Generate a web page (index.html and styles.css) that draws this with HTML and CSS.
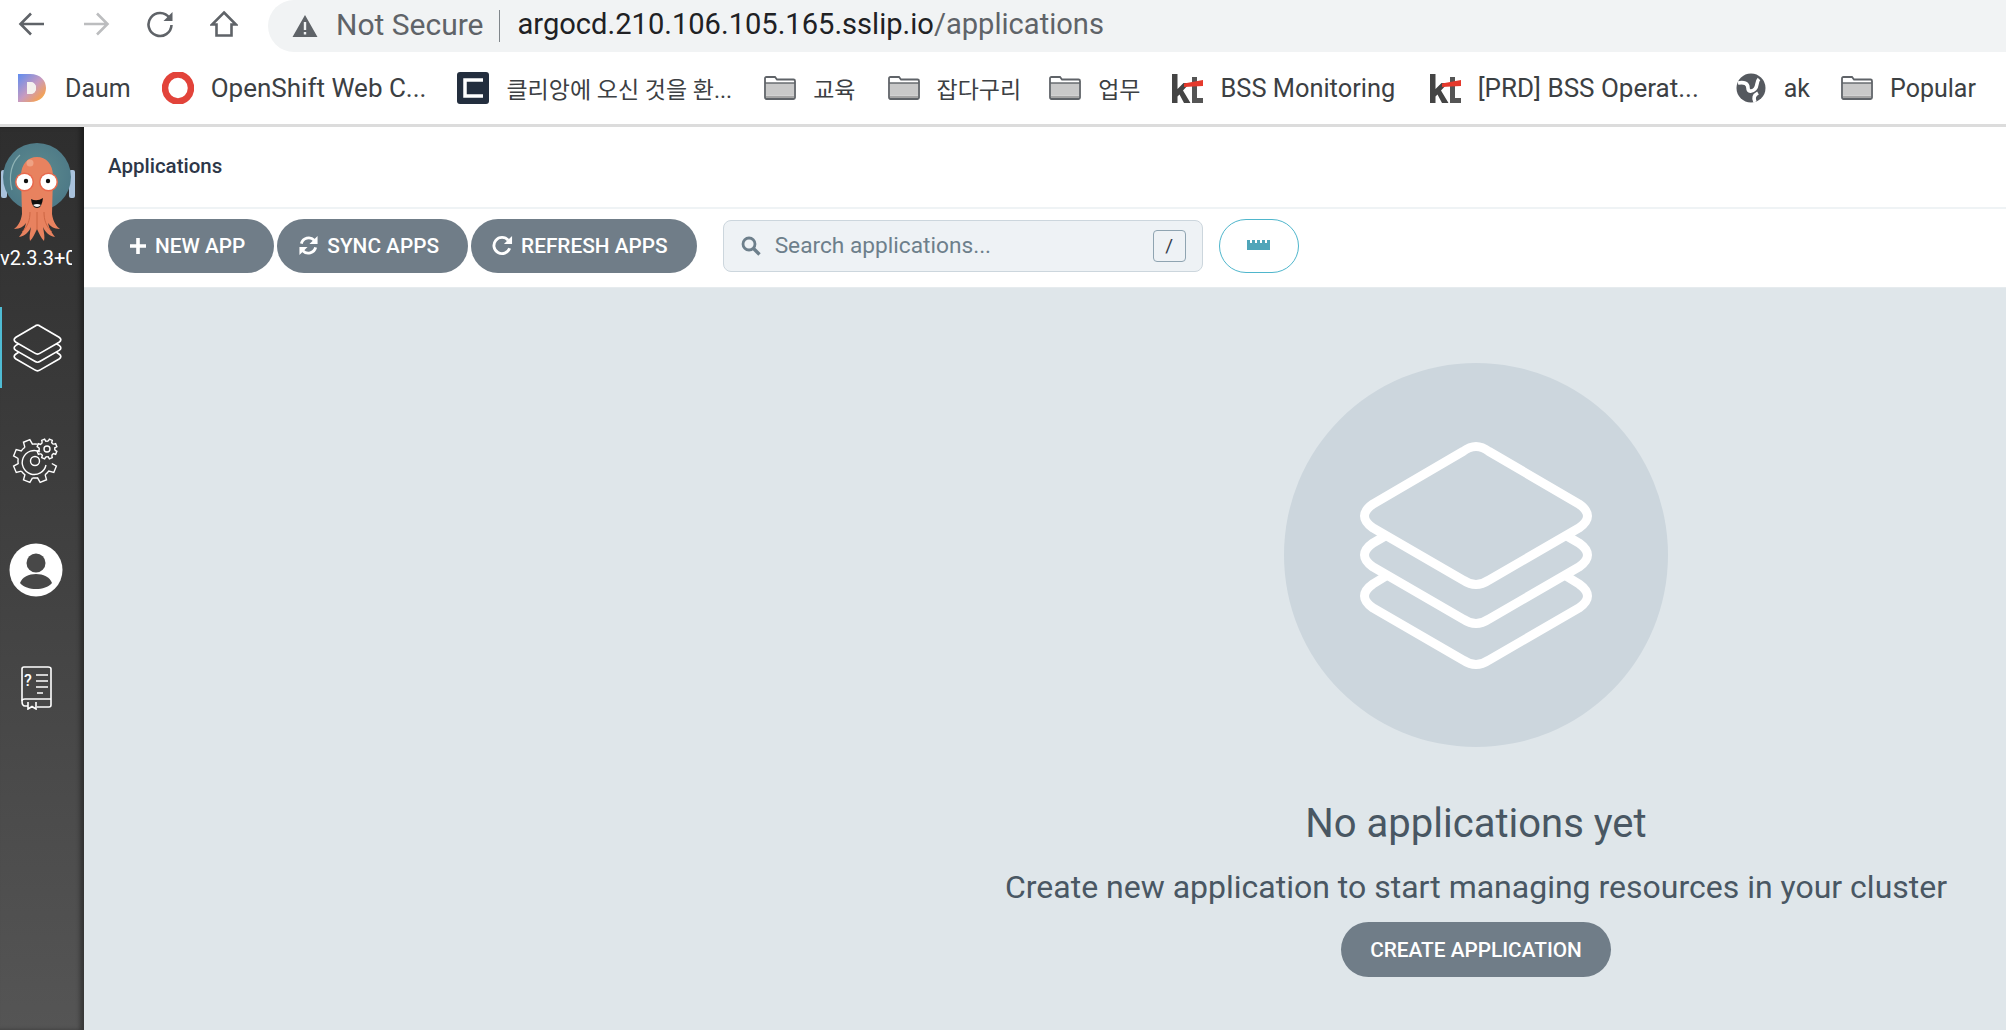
FILE: index.html
```html
<!DOCTYPE html>
<html lang="en">

<head>
    <meta charset="UTF-8">
    <title>Argo CD</title>
    <link rel="stylesheet" href="styles.css">
</head>

<body>
    <svg class="defs" width="0" height="0">
        <defs>
            <symbol id="layers" viewBox="-1 -1 234 229">
                <path d="M103 9.5 Q116 -0.5 129 9.5 L219 62 Q236 74 219 86 L129 138 Q116 147 103 138 L13 86 Q-4 74 13 62 Z" />
                <path d="M26 93.5 L13 101 Q-4 113 13 125 L103 177 Q116 186 129 177 L219 125 Q236 113 219 101 L206 93.5" />
                <path d="M26 134 L13 142 Q-4 154 13 166 L103 218 Q116 227 129 218 L219 166 Q236 154 219 142 L206 134" />
            </symbol>
            <path id="tooth" vector-effect="non-scaling-stroke" d="M16.8 2.5 L21.4 5.1 L18.8 11.5 L13.7 10.1 A17 17 0 0 1 10.1 13.7" />
            <symbol id="folder" viewBox="0 0 32 24">
                <path d="M1 21 V2.5 Q1 1 2.5 1 H11 L13 3.5 H29.5 Q31 3.5 31 5 V21.5 Q31 23 29.5 23 H2.5 Q1 23 1 21 Z" fill="#fff" stroke="#5f6368" stroke-width="1.8" />
                <path d="M2 7 H30 V19 H2 Z" fill="#c9c9c9" />
                <path d="M1 7 H31" stroke="#5f6368" stroke-width="1.4" />
                <path d="M2 19.5 H30 V22 H2 Z" fill="#a4a4a4" />
            </symbol>
            <symbol id="kt" viewBox="0 0 32 32">
                <path d="M1 2 H6.5 V17 L12.5 11 H19 L12 18.5 L19.5 31 H13 L8.5 22.5 L6.5 24.5 V31 H1 Z" fill="#444" />
                <path d="M21 5 H26 V31 H21 Z" fill="#555" />
                <path d="M26 31 H32 V26 H26 Z" fill="#555" />
                <path d="M13 11.5 L32 8 V14 L13 15 Z" fill="#e5392c" />
            </symbol>
        </defs>
    </svg>

    <div class="toolbar">
        <div class="nav-icons">
            <svg class="nav-icon" viewBox="0 0 28 28"><path d="M26 14 H3 M13 3.5 L2.5 14 L13 24.5" /></svg>
            <svg class="nav-icon forward" viewBox="0 0 28 28"><path d="M2 14 H25 M15 3.5 L25.5 14 L15 24.5" /></svg>
            <svg class="nav-icon" viewBox="0 0 28 28"><path d="M23.5 8 A11.5 11.5 0 1 0 25.5 15" /><path class="solid" d="M26.5 2 V11 H17.5 Z" /></svg>
            <svg class="nav-icon" viewBox="0 0 28 28"><path d="M14 2.5 L26 14.5 H21.5 V25.5 H6.5 V14.5 H2 Z" /></svg>
        </div>
        <div class="omnibox">
            <svg class="warn" viewBox="0 0 26 24"><path d="M13 1 L25.5 23 H.5 Z M11.8 8 V16 H14.2 V8 Z M11.8 18 V20.5 H14.2 V18 Z" fill-rule="evenodd" /></svg>
            <span class="not-secure">Not Secure</span>
            <span class="omni-sep"></span>
            <span class="url">argocd.210.106.105.165.sslip.io<span class="url-path">/applications</span></span>
        </div>
    </div>

    <div class="bookmarks">
        <a class="bm gap-31">
            <svg class="bm-icon" viewBox="0 0 32 32">
                <defs>
                    <linearGradient id="daumfill" x1="0" y1="0" x2="1" y2="1">
                        <stop offset="0" stop-color="#5f8df0" />
                        <stop offset=".5" stop-color="#c79bc0" />
                        <stop offset=".8" stop-color="#f0a060" />
                        <stop offset="1" stop-color="#f0d040" />
                    </linearGradient>
                </defs>
                <path d="M2 2 H14 C25 2 30 9 30 16 C30 23 25 30 14 30 H2 Z M11 10 V22 H14 C18 22 20 19 20 16 C20 13 18 10 14 10 Z" fill="url(#daumfill)" fill-rule="evenodd" />
                <path d="M11 10 H14 C18 10 20 13 20 16 C20 19 18 22 14 22 H11 Z" fill="#f4f1ee" />
            </svg>
            Daum
        </a>
        <a class="bm bm-long gap-31">
            <svg class="bm-icon" viewBox="0 0 32 32"><ellipse cx="16" cy="16" rx="13" ry="13.5" fill="none" stroke="#e2433a" stroke-width="6.5" /></svg>
            OpenShift Web C...
        </a>
        <a class="bm bm-cjk gap-32">
            <svg class="bm-icon" viewBox="0 0 32 32"><rect width="32" height="32" rx="3" fill="#232e3e" /><path d="M26 8 H8 V24 H26" fill="none" stroke="#fff" stroke-width="3.5" /></svg>
            클리앙에 오신 것을 환...
        </a>
        <a class="bm bm-cjk gap-32"><svg class="bm-icon folder-icon"><use href="#folder" /></svg>교육</a>
        <a class="bm bm-cjk gap-28"><svg class="bm-icon folder-icon"><use href="#folder" /></svg>잡다구리</a>
        <a class="bm bm-cjk gap-31"><svg class="bm-icon folder-icon"><use href="#folder" /></svg>업무</a>
        <a class="bm bm-mid"><svg class="bm-icon"><use href="#kt" /></svg>BSS Monitoring</a>
        <a class="bm bm-long gap-36"><svg class="bm-icon"><use href="#kt" /></svg>[PRD] BSS Operat...</a>
        <a class="bm gap-31">
            <svg class="bm-icon" viewBox="0 0 32 32">
                <circle cx="16" cy="16" r="14.5" fill="#55595f" />
                <path d="M3 11 C9 10 13 11 13 16 C13 20 17 20 20 17 C23 14 21 10 24 7 M20 30 C18 26 19 23 23 21" fill="none" stroke="#fff" stroke-width="3.6" />
            </svg>
            ak
        </a>
        <a class="bm"><svg class="bm-icon folder-icon"><use href="#folder" /></svg>Popular</a>
    </div>

    <div class="app">
        <nav class="sidebar">
            <svg class="logo" viewBox="0 143 76 98">
                <defs>
                    <radialGradient id="helmet" cx=".5" cy=".45" r=".6">
                        <stop offset="0" stop-color="#5e8b8e" />
                        <stop offset="1" stop-color="#4b7786" />
                    </radialGradient>
                </defs>
                <rect x="1" y="170" width="6" height="28" rx="2" fill="#a9c2dc" />
                <rect x="69" y="170" width="6" height="28" rx="2" fill="#a9c2dc" />
                <circle cx="37" cy="177" r="34" fill="url(#helmet)" />
                <path d="M12 190 C8 175 12 162 20 155" fill="none" stroke="#8fb3b5" stroke-width="1.2" />
                <path d="M21 176 C21 164 28 157 37 157 C46 157 53 164 53 176 L52 214 C53 222 57 227 60 229 C54 229 50 226 48 223 C49 229 52 233 55 237 C49 236 45 232 43 227 C44 233 45 237 44 241 C41 238 39 233 37 229 C35 233 33 238 30 241 C29 237 30 233 31 227 C29 232 25 236 19 237 C22 233 25 229 26 223 C24 226 20 229 14 229 C17 227 21 222 22 214 Z" fill="#e8825f" />
                <path d="M30 212 C30 220 28 226 22 232 M37 212 V230 M44 212 C44 220 46 226 52 232" fill="none" stroke="#c9623f" stroke-width=".9" />
                <circle cx="30" cy="163" r="3.5" fill="#efa284" />
                <circle cx="24.5" cy="182" r="9.5" fill="#e8694d" />
                <circle cx="24.5" cy="182" r="8" fill="#fff" />
                <circle cx="26" cy="181" r="2.2" fill="#111" />
                <circle cx="48.5" cy="182" r="9.5" fill="#e8694d" />
                <circle cx="48.5" cy="182" r="8" fill="#fff" />
                <circle cx="48" cy="181" r="2.2" fill="#111" />
                <path d="M31 199 Q37 202 43 198 Q42 208 37 208 Q32 208 31 199 Z" fill="#111" />
                <path d="M33 205 Q37 203 41 205 Q37 209 33 205 Z" fill="#f2f2f2" />
            </svg>
            <div class="version"><span>v2.3.3+0a1b2c3</span></div>
            <a class="nav-item active">
                <svg class="nav-layers"><use href="#layers" /></svg>
            </a>
            <a class="nav-item nav-settings">
                <svg class="nav-gear" viewBox="12 438 50 48">
                    <g transform="translate(36 462)">
                        <use href="#tooth" transform="rotate(0)" />
                        <use href="#tooth" transform="rotate(45)" />
                        <use href="#tooth" transform="rotate(90)" />
                        <use href="#tooth" transform="rotate(135)" />
                        <use href="#tooth" transform="rotate(180)" />
                        <use href="#tooth" transform="rotate(225)" />
                    </g>
                    <g transform="translate(48 450) scale(.46)">
                        <use href="#tooth" transform="rotate(0)" />
                        <use href="#tooth" transform="rotate(45)" />
                        <use href="#tooth" transform="rotate(90)" />
                        <use href="#tooth" transform="rotate(135)" />
                        <use href="#tooth" transform="rotate(180)" />
                        <use href="#tooth" transform="rotate(225)" />
                        <use href="#tooth" transform="rotate(270)" />
                        <use href="#tooth" transform="rotate(315)" />
                    </g>
                    <circle cx="48" cy="450" r="3" />
                    <circle cx="36" cy="462" r="4.5" />
                    <path d="M41 453 A12 12 0 1 0 47 466" />
                </svg>
            </a>
            <a class="nav-item nav-user">
                <svg class="nav-person" viewBox="0 0 54 54">
                    <circle cx="27" cy="27" r="26.5" fill="#fff" />
                    <circle cx="27" cy="20" r="9.5" fill="#484848" />
                    <path d="M11 40 C15 28 39 28 43 40 C36 48 18 48 11 40 Z" fill="#484848" />
                </svg>
            </a>
            <a class="nav-item nav-help">
                <svg class="nav-book" viewBox="0 0 34 44">
                    <path d="M3 35 V3 Q3 1 5 1 H29 Q32 1 32 3 V39 Q32 41 30 41 H18" />
                    <path d="M3 35 Q3 33 6 33 H32 M3 35 Q3 40 6 40 H9" />
                    <path d="M9 36 V43 L13 40.5 L17 43 V36" />
                    <path d="M17 9 H29 M17 15 H29 M17 21 H29 M18 27 H24" />
                    <text class="book-q" x="5" y="20">?</text>
                </svg>
            </a>
        </nav>

        <main class="main">
            <div class="page-title">Applications</div>
            <div class="page-tools">
                <button class="btn">
                    <svg class="btn-icon btn-plus" viewBox="0 0 18 18"><path d="M9 1 V17 M1 9 H17" stroke-width="3.6" /></svg>
                    NEW APP
                </button>
                <button class="btn">
                    <svg class="btn-icon" viewBox="0 0 22 22"><path d="M3.5 9 A8 8 0 0 1 17 5.5" stroke-width="3" /><path class="solid" d="M20.5 1 V9.5 H12 Z" /><path d="M18.5 13 A8 8 0 0 1 5 16.5" stroke-width="3" /><path class="solid" d="M1.5 21 V12.5 H10 Z" /></svg>
                    SYNC APPS
                </button>
                <button class="btn">
                    <svg class="btn-icon" viewBox="0 0 22 22"><path d="M17 5.5 A8.5 8.5 0 1 0 18.5 14" stroke-width="3" /><path class="solid" d="M21 1 V9.5 H12.5 Z" /></svg>
                    REFRESH APPS
                </button>
                <div class="search">
                    <svg class="search-icon" viewBox="0 0 20 20"><circle cx="8" cy="8" r="6" /><path d="M12.5 12.5 L18.5 18.5" stroke-width="3.4" /></svg>
                    <span class="search-text">Search applications...</span>
                    <span class="kbd">/</span>
                </div>
                <button class="btn-ruler">
                    <svg class="ruler-icon" viewBox="0 0 23 10"><path d="M0 0 H3 V3 H5 V0 H8 V3 H10 V0 H13 V3 H15 V0 H18 V3 H20 V0 H23 V10 H0 Z" /></svg>
                </button>
            </div>
            <div class="content">
                <div class="empty">
                    <div class="empty-circle">
                        <svg class="empty-layers"><use href="#layers" /></svg>
                    </div>
                    <h1 class="empty-title">No applications yet</h1>
                    <p class="empty-text">Create new application to start managing resources in your cluster</p>
                    <button class="btn-create">CREATE APPLICATION</button>
                </div>
            </div>
        </main>
    </div>
</body>

</html>
```

FILE: styles.css
```css
* {
    margin: 0;
    padding: 0;
    box-sizing: border-box;
    font-family: Roboto, "Noto Sans CJK KR", sans-serif;
}

html,
body {
    height: 100%;
    overflow: hidden;
    background: #fff;
}

body {
    display: flex;
    flex-direction: column;
}

.defs {
    position: absolute;
}

/* browser chrome */
.toolbar {
    display: flex;
    height: 52px;
    background: #fff;
}

.nav-icons {
    display: flex;
    gap: 36px;
    width: 268px;
    padding: 10px 0 0 18px;
}

.nav-icon {
    width: 28px;
    height: 28px;
    fill: none;
    stroke: #5f6368;
    stroke-width: 2.6;
}

.nav-icon .solid {
    fill: #5f6368;
    stroke: none;
}

.nav-icon.forward {
    stroke: #bcbdbf;
}

.omnibox {
    flex: 1;
    display: flex;
    align-items: center;
    background: #f1f3f4;
    border-radius: 26px 0 0 26px;
    padding: 0 0 4px 24px;
}

.warn {
    width: 26px;
    height: 24px;
    fill: #5f6368;
    margin: 3px 18px 0 0;
}

.not-secure {
    font-size: 30px;
    color: #5f6368;
}

.omni-sep {
    width: 1px;
    height: 32px;
    background: #80868b;
    margin: 3px 18px 0 15px;
}

.url {
    font-size: 29.1px;
    color: #202124;
}

.url-path {
    color: #5f6368;
}

.bookmarks {
    display: flex;
    align-items: center;
    height: 75px;
    padding: 0 0 0 16px;
    border-bottom: 3px solid #dcdcdc;
    background: #fff;
}

.bm {
    display: flex;
    align-items: center;
    gap: 17px;
    font-size: 25px;
    color: #3c4043;
    white-space: nowrap;
    margin-right: 33.5px;
}

.bm-long {
    font-size: 26px;
}

.bm-mid {
    font-size: 25.4px;
}

.bm-cjk {
    font-size: 23px;
}

.gap-28 {
    margin-right: 28px;
}

.gap-31 {
    margin-right: 31px;
}

.gap-32 {
    margin-right: 32px;
}

.gap-36 {
    margin-right: 36px;
}

.bm-icon {
    width: 32px;
    height: 32px;
    flex-shrink: 0;
}

.folder-icon {
    height: 24px;
}

/* sidebar */
.app {
    flex: 1;
    display: flex;
    min-height: 0;
}

.sidebar {
    position: relative;
    z-index: 1;
    width: 84px;
    display: flex;
    flex-direction: column;
    background: linear-gradient(to bottom, #2e2e2e, #555);
    box-shadow: inset -4px 0 4px rgba(0, 0, 0, 0.35);
    padding-top: 16px;
}

.logo {
    width: 76px;
    height: 98px;
    display: block;
}

.version {
    width: 72px;
    overflow: hidden;
    white-space: nowrap;
    color: #fff;
    font-size: 20px;
    line-height: 24px;
    margin-top: 5px;
}

.nav-item {
    display: flex;
    align-items: center;
    justify-content: center;
    height: 81px;
    margin-top: 29px;
    padding-right: 12px;
}

.nav-item.active {
    margin-top: 37px;
    border-left: 2px solid #4fbcd4;
    padding-right: 14px;
}

.nav-settings {
    margin-top: 32px;
}

.nav-user {
    margin-top: 28px;
}

.nav-help {
    margin-top: 37px;
}

.nav-layers {
    width: 49px;
    height: 48px;
    fill: none;
    stroke: #fff;
    stroke-width: 8;
    margin-left: 2px;
}

.nav-gear {
    width: 50px;
    height: 48px;
    fill: none;
    stroke: #fff;
    stroke-width: 1.4;
}

.nav-gear use {
    fill: none;
}

.nav-person {
    width: 54px;
    height: 54px;
}

.nav-book {
    width: 34px;
    height: 44px;
    fill: none;
    stroke: #fff;
    stroke-width: 1.6;
}

.book-q {
    fill: #fff;
    stroke: none;
    font-size: 16px;
    font-weight: 500;
}

/* page */
.main {
    flex: 1;
    display: flex;
    flex-direction: column;
    min-width: 0;
}

.page-title {
    height: 82px;
    display: flex;
    align-items: center;
    padding: 0 0 3px 24px;
    font-size: 20.5px;
    font-weight: 500;
    color: #2d3748;
    border-bottom: 2px solid #eff3f5;
}

.page-tools {
    display: flex;
    align-items: center;
    height: 78px;
    padding: 0 0 5px 24px;
    gap: 3px;
    background: #fff;
}

.btn {
    display: flex;
    align-items: center;
    gap: 8px;
    height: 54px;
    padding: 0 29px 0 21px;
    border: none;
    border-radius: 27px;
    background: #707d88;
    color: #fff;
    font-size: 20.8px;
    font-weight: 500;
}

.btn-icon {
    width: 21px;
    height: 21px;
    fill: none;
    stroke: #fff;
}

.btn-icon .solid {
    fill: #fff;
    stroke: none;
}

.btn-plus {
    width: 18px;
    height: 18px;
}

.search {
    display: flex;
    align-items: center;
    width: 480px;
    height: 52px;
    margin-left: 23px;
    padding: 0 16px 0 17px;
    background: #eef2f5;
    border: 1px solid #ccd6dd;
    border-radius: 8px;
}

.search-icon {
    width: 20px;
    height: 20px;
    fill: none;
    stroke: #6d7f8b;
    stroke-width: 2.8;
}

.search-text {
    flex: 1;
    margin-left: 14px;
    font-size: 22.7px;
    color: #6d7f8b;
}

.kbd {
    width: 33px;
    height: 32px;
    display: flex;
    align-items: center;
    justify-content: center;
    border: 1px solid #8fa4b1;
    border-radius: 4px;
    font-size: 19px;
    color: #363c4a;
}

.btn-ruler {
    display: flex;
    align-items: center;
    justify-content: center;
    width: 80px;
    height: 54px;
    margin-left: 13px;
    background: #fff;
    border: 1px solid #4fb6cc;
    border-radius: 27px;
}

.ruler-icon {
    width: 23px;
    height: 10px;
    fill: #4fa5b9;
    margin-bottom: 2px;
}

.content {
    flex: 1;
    background: #dfe6ea;
    border-top: 1px solid #e6ebee;
    min-height: 0;
}

.empty {
    display: flex;
    flex-direction: column;
    align-items: center;
    width: 940px;
    margin-left: 922px;
    padding-top: 75px;
}

.empty-circle {
    flex-shrink: 0;
    display: flex;
    align-items: center;
    justify-content: center;
    width: 384px;
    height: 384px;
    border-radius: 50%;
    background: #ccd6dd;
}

.empty-layers {
    width: 234px;
    height: 229px;
    fill: none;
    stroke: #fff;
    stroke-width: 9;
}

.empty-title {
    margin-top: 53px;
    font-size: 40px;
    line-height: 48px;
    font-weight: 400;
    color: #495763;
}

.empty-text {
    margin-top: 21px;
    font-size: 32px;
    line-height: 36px;
    white-space: nowrap;
    color: #495763;
}

.btn-create {
    margin-top: 17px;
    width: 270px;
    height: 55px;
    border: none;
    border-radius: 28px;
    background: #707d88;
    color: #fff;
    font-size: 20.8px;
    font-weight: 500;
}
```
